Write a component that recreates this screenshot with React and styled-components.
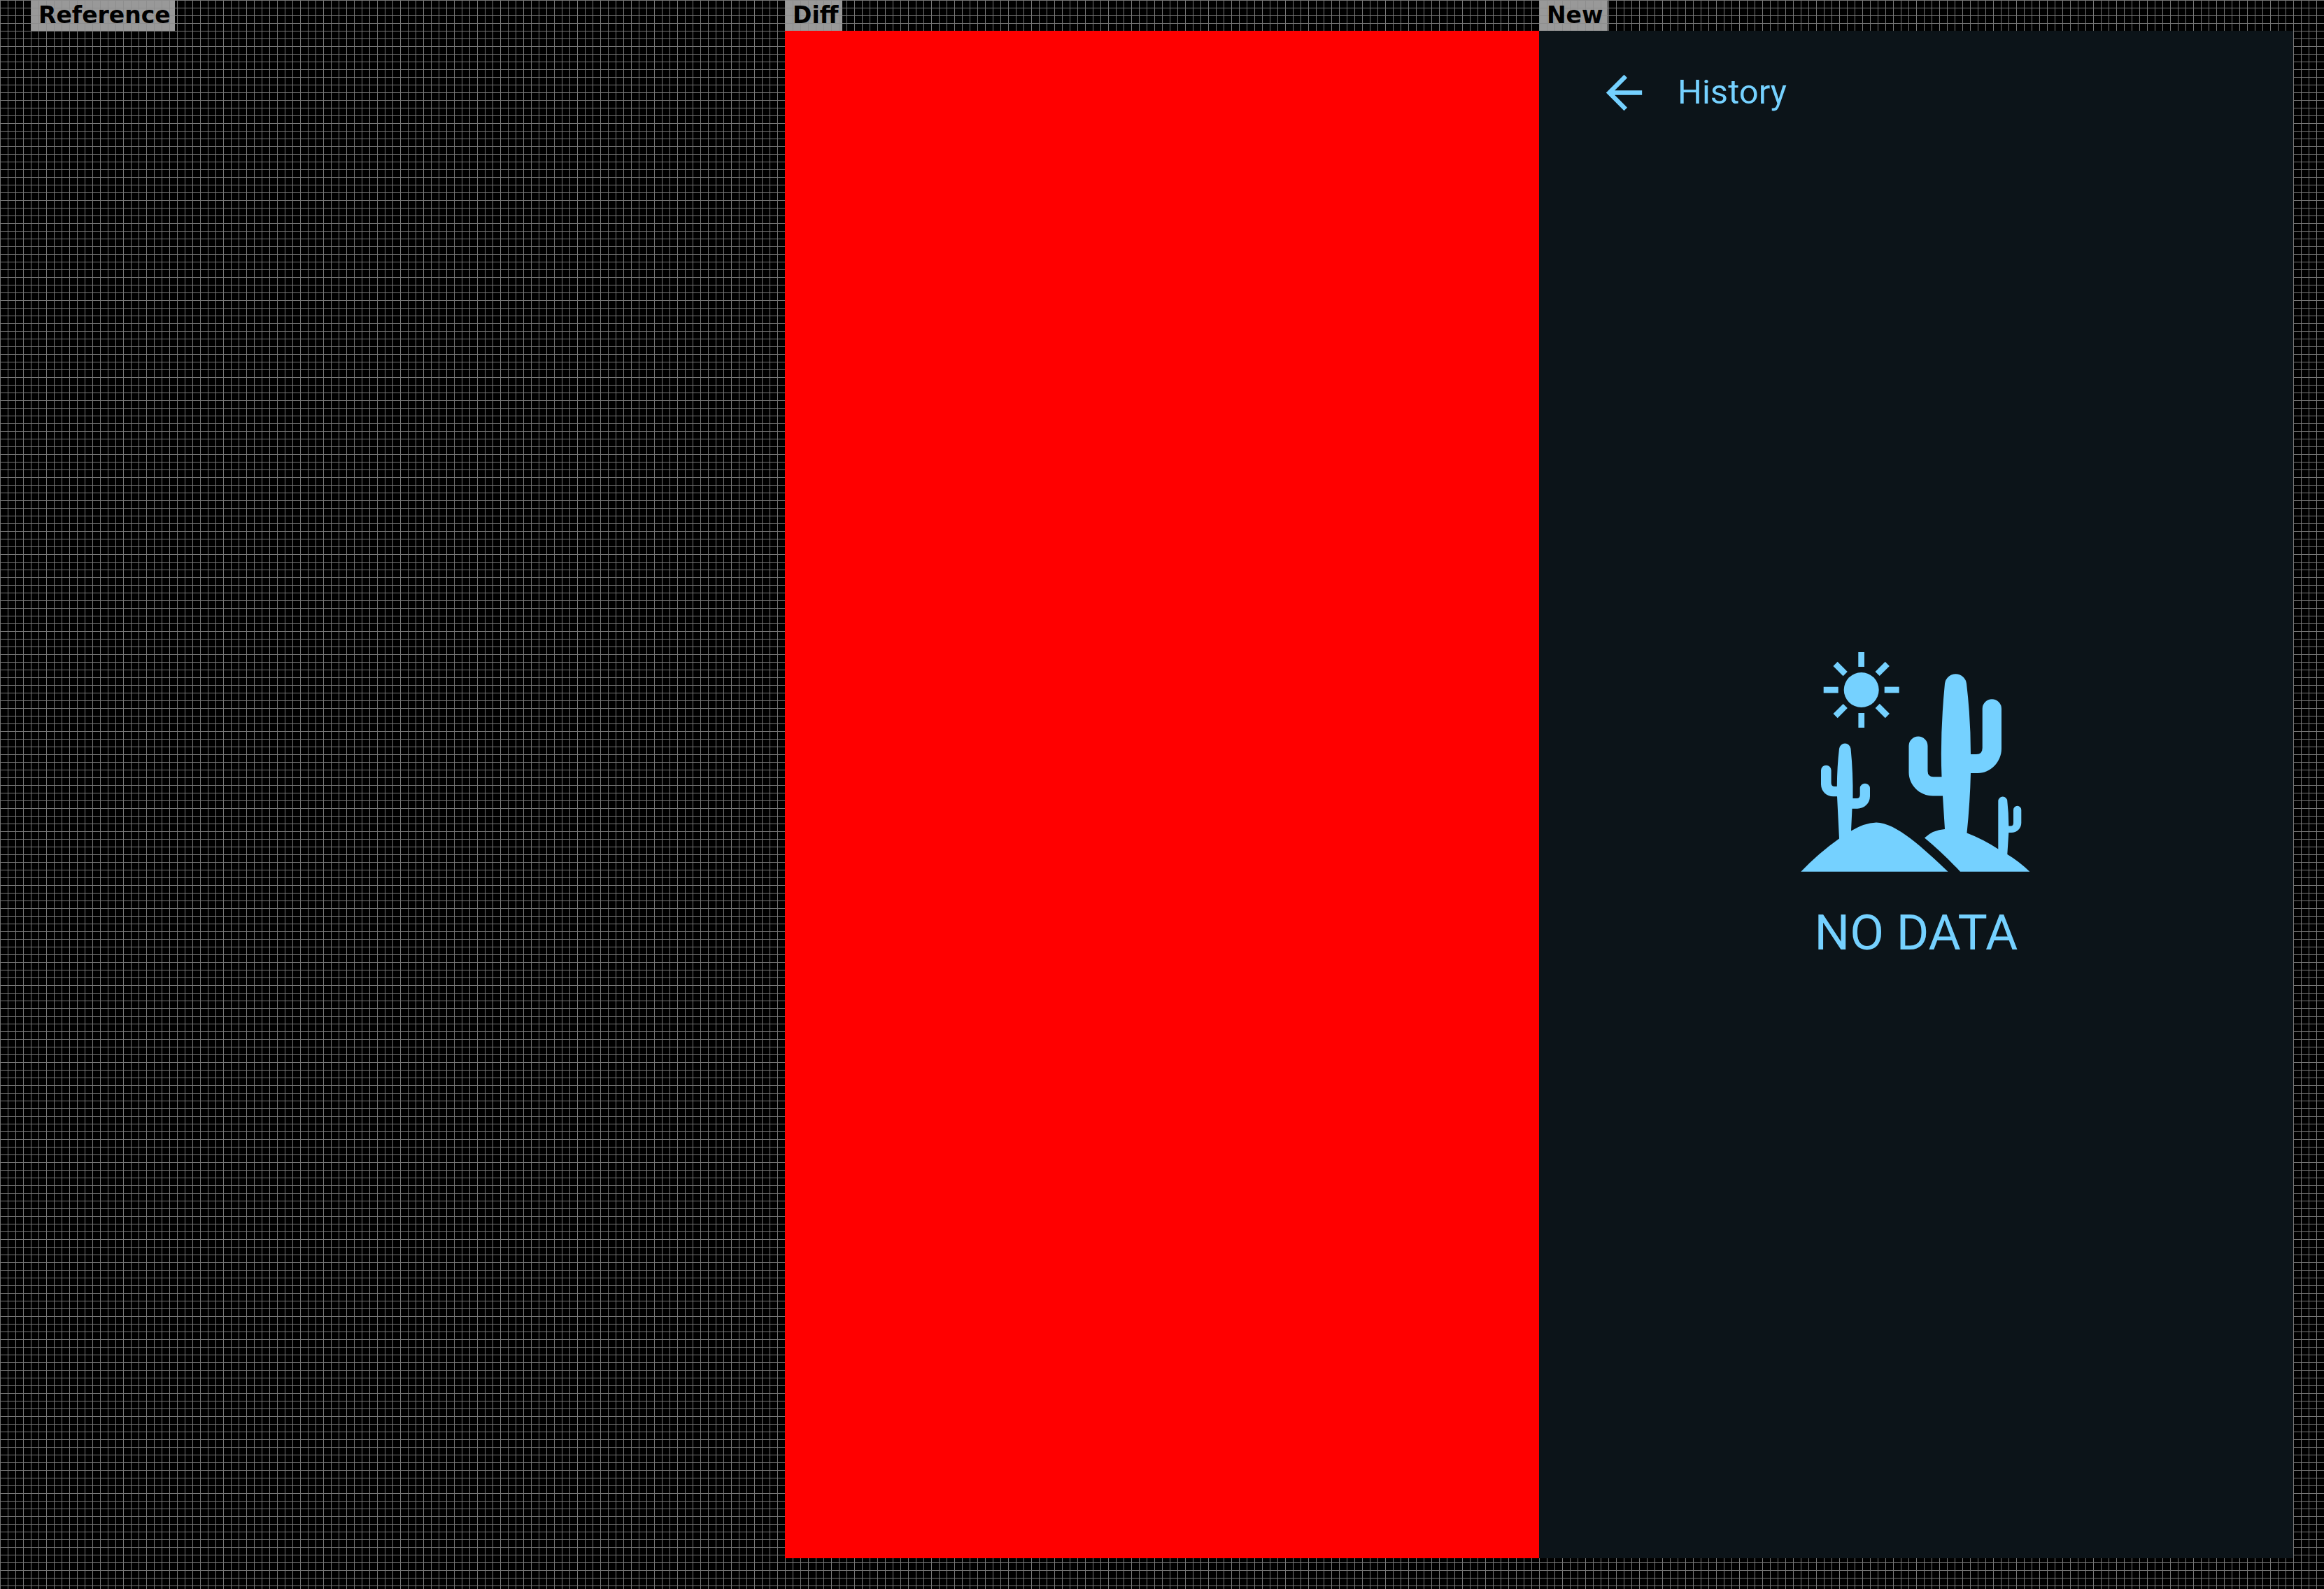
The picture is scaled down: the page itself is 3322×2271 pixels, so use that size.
import React from "react";
import styled, { createGlobalStyle } from "styled-components";

const ink = "#75d1ff";

const grid = (line, base) => `
  linear-gradient(to right, ${line} 1px, transparent 1px) 0 0 / 11px 11px,
  linear-gradient(to bottom, ${line} 1px, transparent 1px) 0 0 / 11px 11px,
  ${base}
`;

const GlobalStyle = createGlobalStyle`
  body {
    margin: 0;
    background: #000;
  }
`;

const Page = styled.main`
  box-sizing: border-box;
  min-height: 100vh;
  padding: 0 44px 44px;
  display: grid;
  grid-template-columns: repeat(3, minmax(0, 1fr));
  background: ${grid("#777", "#000")};
`;

const Column = styled.section`
  display: flex;
  flex-direction: column;
  align-items: flex-start;
`;

const Label = styled.h2`
  box-sizing: border-box;
  height: 44px;
  margin: 0;
  padding: 0 6px 0 11px;
  background: ${grid("#8e8e8e", "#999")};
  color: #000;
  font: bold 33px/44px "DejaVu Sans", sans-serif;
`;

const Panel = styled.div`
  flex: 1;
  align-self: stretch;
  display: flex;
  flex-direction: column;
  background: ${(p) => p.$fill || "transparent"};
  color: ${ink};
  font-family: Roboto, sans-serif;
`;

const TopBar = styled.header`
  display: flex;
  align-items: center;
  gap: 38px;
  height: 176px;
  padding: 0 83px;
`;

const BackButton = styled.button`
  display: flex;
  padding: 0;
  border: 0;
  background: none;
  color: inherit;
`;

const Title = styled.h1`
  margin: 0;
  font-size: 49px;
  font-weight: 400;
  line-height: 60px;
`;

const Empty = styled.div`
  flex: 1;
  display: flex;
  flex-direction: column;
  align-items: center;
  justify-content: center;
  gap: 44px;
  padding-bottom: 140px;
`;

const Message = styled.p`
  margin: 0;
  font-size: 71px;
  line-height: 86px;
`;

function BackIcon() {
  return (
    <svg width="77" height="77" viewBox="0 0 24 24" fill="currentColor" aria-hidden="true">
      <path d="M20 11H7.83l5.59-5.59L12 4l-8 8 8 8 1.41-1.41L7.83 13H20v-2z" />
    </svg>
  );
}

const rays = [0, 45, 90, 135, 180, 225, 270, 315];

function Desert() {
  return (
    <svg width="330" height="315" viewBox="2574 932 330 315" fill="currentColor" aria-hidden="true">
      <circle cx="2660.7" cy="987" r="25" />
      {rays.map((angle) => (
        <rect key={angle} x="2656.3" y={angle % 90 ? 934.5 : 933} width="8.7" height={angle % 90 ? 20 : 21} transform={`rotate(${angle} 2660.7 987)`} />
      ))}
      <path d="M2574.3 1246.7Q2600 1220 2629 1199.500L2626 1139.300H2620.500C2611 1139.300 2603 1132 2603 1122V1102A7.300 7.300 0 0 1 2617.600 1102V1120Q2617.600 1125 2622.500 1125H2625.800Q2626 1096 2629 1071A8.300 8.300 0 0 1 2645.500 1071Q2649 1106 2648.500 1142H2654Q2658.700 1142 2658.700 1137V1127A7.200 7.200 0 0 1 2673 1127V1139C2673 1149 2665 1156.700 2655 1156.700H2647.500L2646 1188.500Q2665 1177 2682 1176.500C2710 1176.500 2750 1214 2784.500 1246.700Z" />
      <path d="M2751 1198.500Q2763 1187 2780 1186L2777 1138.500H2763C2744 1138.500 2728.500 1123 2728.500 1105V1067A13.500 13.500 0 0 1 2755.500 1067V1103Q2755.500 1111 2763.500 1111.300H2775.500Q2773 1050 2780 978A15.600 15.600 0 0 1 2811 978Q2817 1028 2817 1079H2825Q2833.700 1079 2833.700 1070V1014A13.500 13.500 0 0 1 2861 1014V1071C2861 1090 2845 1106 2827 1106H2817Q2816 1148 2811.500 1191.500Q2834 1200 2856.300 1214.500V1146A6.500 6.500 0 0 1 2869.300 1146Q2871.300 1163 2871.300 1181.500H2874Q2878 1181.500 2878 1177V1158.500A5.600 5.600 0 0 1 2889.300 1158.500V1177C2889.300 1185 2883 1191 2875 1191H2871.300L2869.300 1222Q2886 1232 2901.300 1246.700H2802Q2777 1220 2751 1198.500Z" />
    </svg>
  );
}

export default function App() {
  return (
    <>
      <GlobalStyle />
      <Page>
        <Column>
          <Label>Reference</Label>
          <Panel />
        </Column>
        <Column>
          <Label>Diff</Label>
          <Panel $fill="#f00" />
        </Column>
        <Column>
          <Label>New</Label>
          <Panel $fill="#0c1419">
            <TopBar>
              <BackButton type="button" aria-label="Back">
                <BackIcon />
              </BackButton>
              <Title>History</Title>
            </TopBar>
            <Empty>
              <Desert />
              <Message>NO DATA</Message>
            </Empty>
          </Panel>
        </Column>
      </Page>
    </>
  );
}
